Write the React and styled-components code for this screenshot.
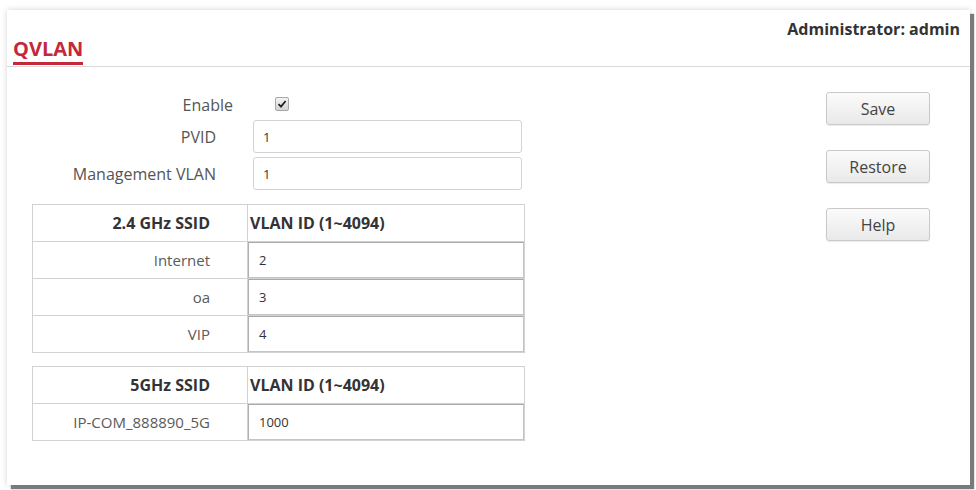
import React from "react"
import styled, { createGlobalStyle } from "styled-components"

const GlobalStyle = createGlobalStyle`
  html, body {
    margin: 0;
    padding: 0;
    background: #fff;
  }
  body {
    font-family: "Open Sans", "DejaVu Sans", sans-serif;
    color: #444;
  }
`

const Page = styled.div`
  padding: 10px 0 0 7px;
  width: 976px;
  height: 490px;
  box-sizing: border-box;
  overflow: hidden;
`

const Panel = styled.div`
  width: 963px;
  height: 475px;
  background: #fff;
  box-shadow: 4px 4px 1px #7a7a7a, 0 0 6px rgba(0, 0, 0, 0.18);
  display: flex;
  flex-direction: column;
`

const Header = styled.div`
  height: 56px;
  display: flex;
  justify-content: space-between;
  border-bottom: 1px solid #d9d9d9;
  padding: 0 10px 0 6px;
`

const Title = styled.div`
  align-self: flex-end;
  font-size: 20px;
  font-weight: 700;
  color: #c4283a;
  line-height: 22px;
  padding-bottom: 2px;
  margin-bottom: 1px;
  border-bottom: 3px solid #c4283a;
`

const Admin = styled.div`
  align-self: flex-start;
  padding-top: 8px;
  font-size: 16px;
  font-weight: 700;
  color: #333;
`

const Body = styled.div`
  display: flex;
  flex: 1;
`

const FormColumn = styled.div`
  display: flex;
  flex-direction: column;
  padding-top: 27px;
`

const FormRow = styled.div`
  display: flex;
  align-items: center;
  height: ${p => p.$h || 33}px;
  margin-bottom: 4px;
`

const Label = styled.div`
  width: ${p => p.$w || 209}px;
  margin-right: ${p => p.$gap || 37}px;
  text-align: right;
  font-size: 16px;
  color: #555;
`

const CheckBox = styled.span`
  width: 12px;
  height: 12px;
  border: 1px solid #a8a8a8;
  border-radius: 2px;
  background: linear-gradient(#f4f4f4, #d4d4d4);
  display: flex;
  align-items: center;
  justify-content: center;
  margin-top: -3px;
`

const TextInput = styled.input`
  width: 269px;
  height: 33px;
  box-sizing: border-box;
  border: 1px solid #d3d3d3;
  border-radius: 3px;
  padding: 0 9px;
  font-family: "Open Sans", sans-serif;
  font-size: 13px;
  color: #333;
  outline: none;
`

const Table = styled.table`
  margin-left: 25px;
  margin-top: ${p => p.$top}px;
  width: 493px;
  border-collapse: collapse;
  border: 1px solid #c4c4c4;
`

const Th = styled.th`
  height: 36px;
  padding: 0;
  font-size: 16px;
  font-weight: 700;
  color: #333;
  text-align: ${p => (p.$left ? "left" : "right")};
  padding-right: ${p => (p.$left ? 0 : 37)}px;
  padding-left: ${p => (p.$left ? 2 : 0)}px;
  border: 1px solid #d2d2d2;
  width: ${p => (p.$left ? "auto" : "177px")};
`

const Td = styled.td`
  height: 36px;
  padding: 0;
  font-size: 15px;
  color: #5a5a5a;
  text-align: right;
  padding-right: ${p => (p.$input ? 0 : 37)}px;
  border: 1px solid #d2d2d2;
`

const CellInput = styled.input`
  display: block;
  width: 100%;
  height: 36px;
  box-sizing: border-box;
  border: 1px solid #c4c4c4;
  border-top-color: #a9a9a9;
  border-left-color: #b0b0b0;
  padding: 0 10px;
  font-family: "Open Sans", sans-serif;
  font-size: 13px;
  color: #333;
  outline: none;
`

const ButtonColumn = styled.div`
  margin-left: auto;
  margin-right: 40px;
  padding-top: 25px;
  display: flex;
  flex-direction: column;
  gap: 25px;
`

const Button = styled.button`
  width: 104px;
  height: 33px;
  border: 1px solid #c9c9c9;
  border-radius: 3px;
  background: linear-gradient(#fbfbfb, #e9e9e9);
  box-shadow: 0 1px 1px rgba(0, 0, 0, 0.08);
  font-family: "Open Sans", sans-serif;
  font-size: 16px;
  color: #444;
  padding: 0;
`

const Check = () => (
  <svg width="10" height="10" viewBox="0 0 10 10">
    <path d="M1.5 5.2 L4 7.6 L8.6 2" fill="none" stroke="#222" strokeWidth="1.8" />
  </svg>
)

const ssid24 = [
  { name: "Internet", vlan: "2" },
  { name: "oa", vlan: "3" },
  { name: "VIP", vlan: "4" },
]

const ssid5 = [{ name: "IP-COM_888890_5G", vlan: "1000" }]

const SsidTable = ({ title, rows, top }) => (
  <Table $top={top}>
    <thead>
      <tr>
        <Th>{title}</Th>
        <Th $left>VLAN ID (1~4094)</Th>
      </tr>
    </thead>
    <tbody>
      {rows.map(r => (
        <tr key={r.name}>
          <Td>{r.name}</Td>
          <Td $input>
            <CellInput defaultValue={r.vlan} />
          </Td>
        </tr>
      ))}
    </tbody>
  </Table>
)

export default function App() {
  return (
    <Page>
      <GlobalStyle />
      <Panel>
        <Header>
          <Title>QVLAN</Title>
          <Admin>Administrator: admin</Admin>
        </Header>
        <Body>
          <FormColumn>
            <FormRow $h={22}>
              <Label $w={226} $gap={42}>Enable</Label>
              <CheckBox>
                <Check />
              </CheckBox>
            </FormRow>
            <FormRow>
              <Label>PVID</Label>
              <TextInput defaultValue="1" />
            </FormRow>
            <FormRow>
              <Label>Management VLAN</Label>
              <TextInput defaultValue="1" />
            </FormRow>
            <SsidTable title="2.4 GHz SSID" rows={ssid24} top={10} />
            <SsidTable title="5GHz SSID" rows={ssid5} top={13} />
          </FormColumn>
          <ButtonColumn>
            <Button>Save</Button>
            <Button>Restore</Button>
            <Button>Help</Button>
          </ButtonColumn>
        </Body>
      </Panel>
    </Page>
  )
}
